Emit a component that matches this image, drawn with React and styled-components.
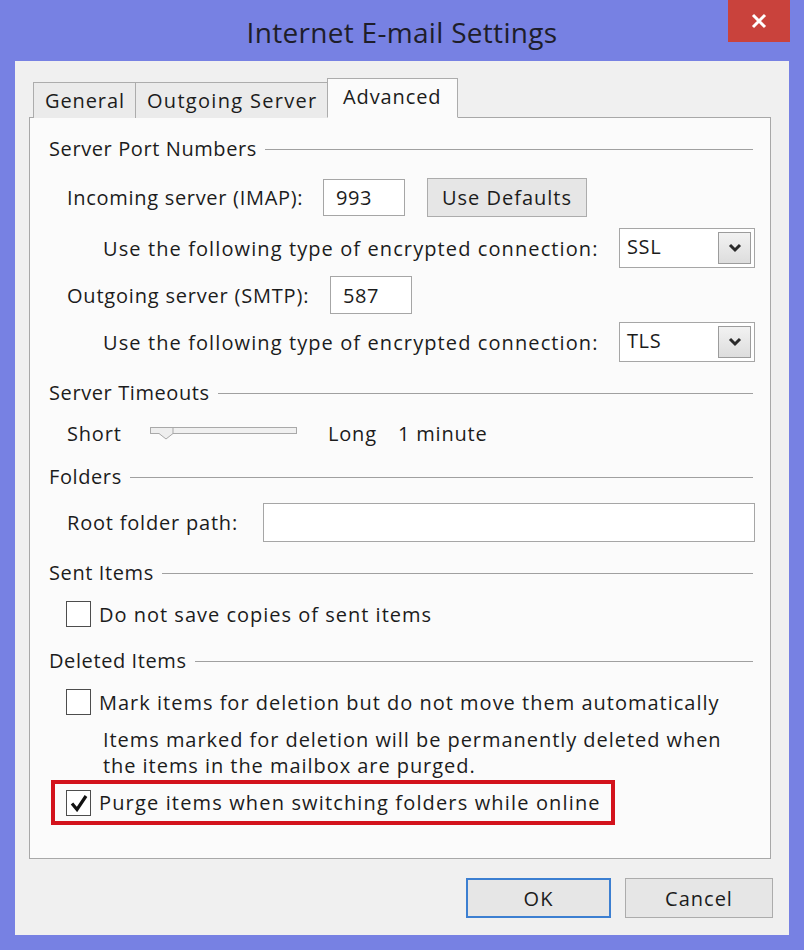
import React from 'react';
import styled, { createGlobalStyle } from 'styled-components';

const Global = createGlobalStyle`
  html, body { margin: 0; padding: 0; }
  body {
    background: #7781e3;
    font-family: "Open Sans", "Liberation Sans", sans-serif;
    color: #1c1c1c;
    width: 804px;
    height: 950px;
    overflow: hidden;
  }
`;

const Frame = styled.div`
  width: 804px;
  height: 950px;
  box-sizing: border-box;
  padding: 0 15px 16px;
  display: flex;
  flex-direction: column;
`;

const TitleBar = styled.div`
  height: 61px;
  flex: none;
  display: grid;
  grid-template-columns: 1fr auto 1fr;
  align-items: start;
`;

const Title = styled.div`
  grid-column: 2;
  padding-top: 14px;
  font-size: 28px;
  line-height: 36px;
  color: #1e1e2a;
  letter-spacing: 0.3px;
`;

const CloseButton = styled.div`
  grid-column: 3;
  justify-self: end;
  margin-right: -1px;
  width: 62px;
  height: 42px;
  background: #c9423c;
  display: flex;
  align-items: center;
  justify-content: center;
`;

const Client = styled.div`
  flex: 1;
  background: #f0f0f0;
  box-sizing: border-box;
  padding: 16px 16px 17px 14px;
  display: flex;
  flex-direction: column;
`;

const TabStrip = styled.div`
  display: flex;
  align-items: flex-end;
  height: 40px;
  padding-left: 4px;
  position: relative;
  z-index: 1;
`;

const Tab = styled.div`
  box-sizing: border-box;
  height: ${p => (p.$active ? '40px' : '36px')};
  width: ${p => p.$w}px;
  margin-left: ${p => (p.$first ? '0' : '-1px')};
  margin-bottom: -1px;
  border: 1px solid #acacac;
  border-bottom: ${p => (p.$active ? '1px solid #fbfbfb' : 'none')};
  background: ${p => (p.$active ? '#fbfbfb' : '#ebebeb')};
  font-size: 20px;
  line-height: 36px;
  padding-left: ${p => (p.$active ? '15px' : '11px')};
  letter-spacing: ${p => p.$ls || 0.9}px;
  white-space: nowrap;
`;

const Panel = styled.div`
  width: 742px;
  height: 742px;
  box-sizing: border-box;
  border: 1px solid #a8a8a8;
  background: #fbfbfb;
  padding: 19px 15px 0 19px;
  display: flex;
  flex-direction: column;
`;

const Heading = styled.div`
  display: flex;
  align-items: center;
  gap: 8px;
  height: 24px;
  margin-top: ${p => p.$mt || 0}px;
  font-size: 20px;
  line-height: 24px;
  letter-spacing: 0.6px;
  white-space: nowrap;
`;

const Rule = styled.div`
  flex: 1;
  height: 1px;
  background: #a0a0a0;
  margin-right: 2px;
  margin-top: 1px;
`;

const Row = styled.div`
  display: flex;
  align-items: center;
  height: ${p => p.$h}px;
  margin-top: ${p => p.$mt || 0}px;
  padding-left: ${p => p.$indent || 0}px;
  font-size: 20px;
  letter-spacing: ${p => p.$ls || 0.6}px;
`;

const Label = styled.span`
  flex: none;
  width: ${p => (p.$w ? `${p.$w}px` : 'auto')};
  white-space: nowrap;
`;

const TextInput = styled.div`
  box-sizing: border-box;
  width: ${p => (p.$w ? `${p.$w}px` : 'auto')};
  flex: ${p => (p.$w ? 'none' : '1')};
  height: ${p => p.$h}px;
  border: 1px solid #a6a6a6;
  background: #ffffff;
  padding-left: 12px;
  display: flex;
  align-items: center;
  font-size: 20px;
  letter-spacing: 0.6px;
`;

const PushButton = styled.div`
  box-sizing: border-box;
  width: ${p => p.$w}px;
  height: ${p => p.$h}px;
  margin-left: ${p => p.$ml || 0}px;
  background: #e6e6e6;
  border: ${p => (p.$default ? '2px solid #3c7fd1' : '1px solid #acacac')};
  display: flex;
  align-items: center;
  justify-content: center;
  font-size: 20px;
  letter-spacing: 1px;
  color: #1c1c1c;
`;

const Select = styled.div`
  box-sizing: border-box;
  width: 136px;
  height: 40px;
  border: 1px solid #a6a6a6;
  background: #ffffff;
  display: flex;
  align-items: center;
  justify-content: space-between;
  padding: 0 3px 0 7px;
  font-size: 20px;
  letter-spacing: 0.6px;
`;

const SelectValue = styled.span`
  margin-top: -4px;
`;

const ArrowBox = styled.div`
  box-sizing: border-box;
  width: 33px;
  height: 32px;
  border: 1px solid #9c9c9c;
  background: linear-gradient(#f2f2f2, #dddddd);
  display: flex;
  align-items: center;
  justify-content: center;
`;

const SliderWrap = styled.div`
  flex: none;
  width: 148px;
  height: 16px;
  margin-top: 4px;
  margin-right: 30px;
  display: flex;
`;

const Box = styled.div`
  box-sizing: border-box;
  flex: none;
  width: 25px;
  height: 26px;
  border: 1px solid #4d4d4d;
  background: #ffffff;
  margin-right: 8px;
  display: flex;
  align-items: center;
  justify-content: center;
`;

const Description = styled.div`
  margin-top: 12px;
  padding-left: 54px;
  font-size: 20px;
  line-height: 26px;
  letter-spacing: 0.95px;
  white-space: nowrap;
`;

const Highlight = styled.div`
  box-sizing: border-box;
  margin-top: 1px;
  margin-left: 2px;
  width: 564px;
  height: 45px;
  border: 4px solid #d3121c;
  padding-left: 11px;
  display: flex;
  align-items: center;
  font-size: 20px;
  letter-spacing: 1.15px;
`;

const ButtonRow = styled.div`
  margin-top: 19px;
  display: flex;
  justify-content: flex-end;
  gap: 14px;
`;

const Chevron = () => (
  <svg width="14" height="10" viewBox="0 0 14 10">
    <polyline points="2,2 7,7 12,2" fill="none" stroke="#2a2a2a" strokeWidth="3" />
  </svg>
);

const Dropdown = ({ value }) => (
  <Select>
    <SelectValue>{value}</SelectValue>
    <ArrowBox>
      <Chevron />
    </ArrowBox>
  </Select>
);

const Slider = () => (
  <SliderWrap>
    <svg width="148" height="16" viewBox="0 0 148 16">
      <rect x="0.5" y="0.5" width="146" height="6" fill="#f0f0f0" stroke="#a9a9a9" />
      <path d="M0.5 0.5 H23 V6.5 L16 12 L9 6.5 H0.5 Z" fill="#eeeeee" stroke="#a9a9a9" />
    </svg>
  </SliderWrap>
);

const Check = () => (
  <svg width="18" height="18" viewBox="0 0 18 18">
    <path d="M2 9.5 L7 15.5 L16 2" fill="none" stroke="#111" strokeWidth="3.2" />
  </svg>
);

const Checkbox = ({ checked }) => <Box>{checked && <Check />}</Box>;

export default function App() {
  return (
    <>
      <Global />
      <Frame>
        <TitleBar>
          <Title>Internet E-mail Settings</Title>
          <CloseButton>
            <svg width="16" height="16" viewBox="0 0 16 16">
              <path d="M2 2 L14 14 M14 2 L2 14" stroke="#ffffff" strokeWidth="3" />
            </svg>
          </CloseButton>
        </TitleBar>
        <Client>
          <TabStrip>
            <Tab $first $w={103}>General</Tab>
            <Tab $w={193} $ls={1.3}>Outgoing Server</Tab>
            <Tab $active $w={131}>Advanced</Tab>
          </TabStrip>
          <Panel>
            <Heading>
              Server Port Numbers
              <Rule />
            </Heading>
            <Row $mt={17} $h={39} $indent={18} $ls={0.7}>
              <Label $w={256}>Incoming server (IMAP):</Label>
              <TextInput $w={82} $h={37}>993</TextInput>
              <PushButton $w={160} $h={39} $ml={22}>Use Defaults</PushButton>
            </Row>
            <Row $mt={11} $h={40} $indent={54} $ls={1.1}>
              <Label $w={516}>Use the following type of encrypted connection:</Label>
              <Dropdown value="SSL" />
            </Row>
            <Row $mt={8} $h={38} $indent={18} $ls={0.8}>
              <Label $w={263}>Outgoing server (SMTP):</Label>
              <TextInput $w={82} $h={38}>587</TextInput>
            </Row>
            <Row $mt={8} $h={40} $indent={54} $ls={1.1}>
              <Label $w={516}>Use the following type of encrypted connection:</Label>
              <Dropdown value="TLS" />
            </Row>

            <Heading $mt={19}>
              Server Timeouts
              <Rule />
            </Heading>
            <Row $mt={16} $h={24} $indent={18} $ls={0.8}>
              <Label $w={83}>Short</Label>
              <Slider />
              <Label $w={70}>Long</Label>
              <Label>1 minute</Label>
            </Row>

            <Heading $mt={20}>
              Folders
              <Rule />
            </Heading>
            <Row $mt={14} $h={39} $indent={18} $ls={0.8}>
              <Label $w={196}>Root folder path:</Label>
              <TextInput $h={39} />
            </Row>

            <Heading $mt={19}>
              Sent Items
              <Rule />
            </Heading>
            <Row $mt={16} $h={26} $indent={17} $ls={1}>
              <Checkbox />
              <Label>Do not save copies of sent items</Label>
            </Row>

            <Heading $mt={22}>
              Deleted Items
              <Rule />
            </Heading>
            <Row $mt={16} $h={26} $indent={17} $ls={1}>
              <Checkbox />
              <Label>Mark items for deletion but do not move them automatically</Label>
            </Row>
            <Description>
              Items marked for deletion will be permanently deleted when
              <br />
              the items in the mailbox are purged.
            </Description>
            <Highlight>
              <Checkbox checked />
              <Label>Purge items when switching folders while online</Label>
            </Highlight>
          </Panel>
          <ButtonRow>
            <PushButton $default $w={145} $h={40}>OK</PushButton>
            <PushButton $w={148} $h={40}>Cancel</PushButton>
          </ButtonRow>
        </Client>
      </Frame>
    </>
  );
}
